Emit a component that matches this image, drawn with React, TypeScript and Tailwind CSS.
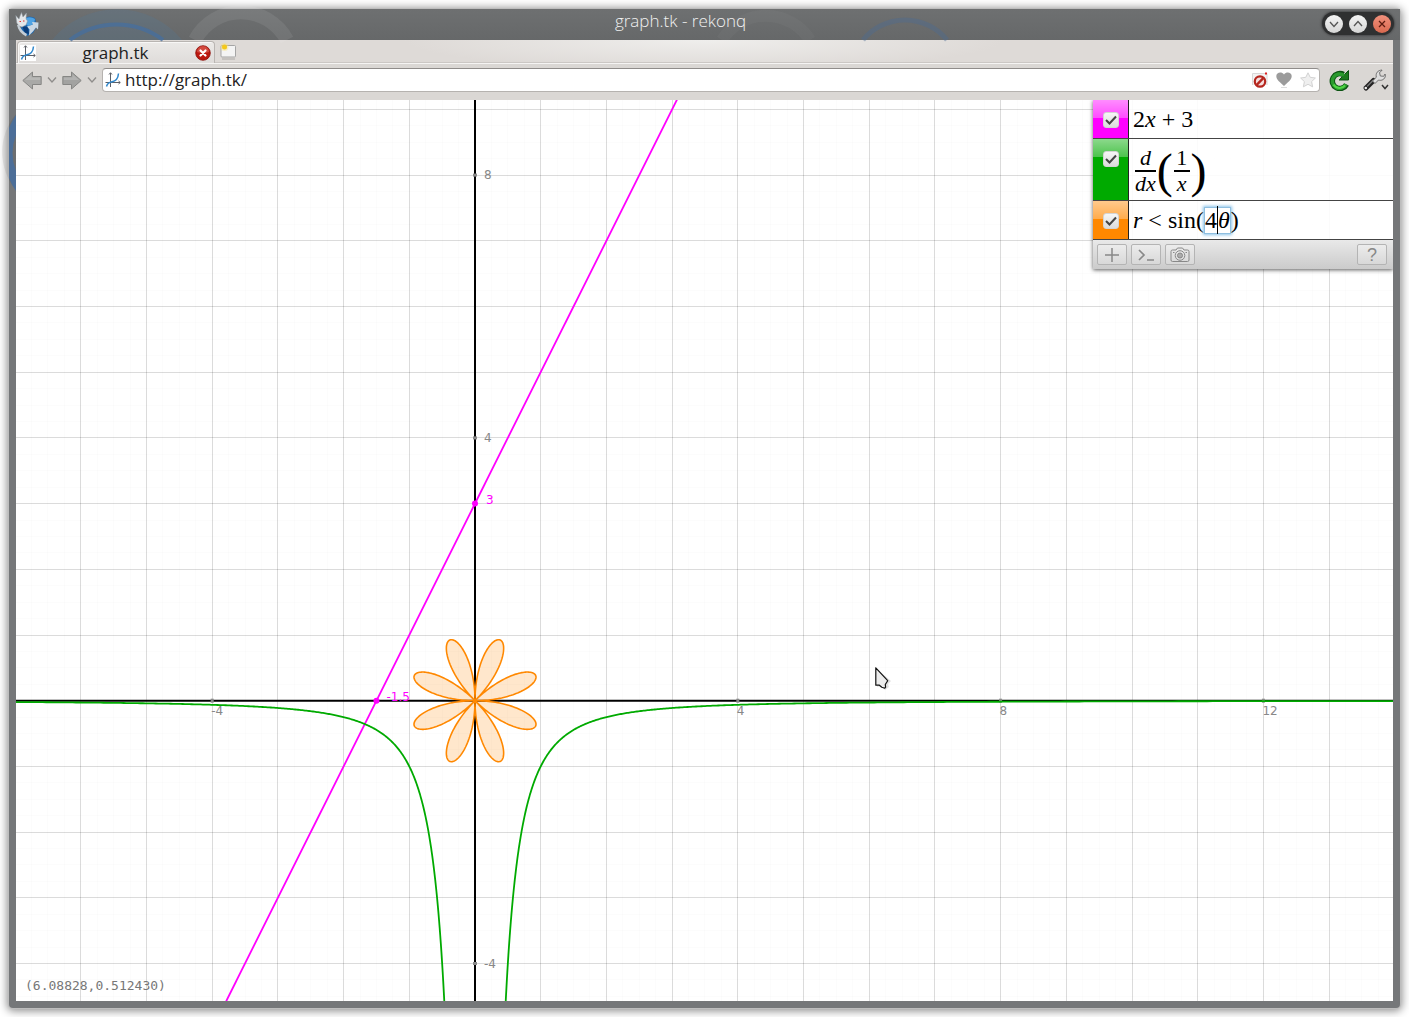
import { useState } from 'react';
import type { ReactNode } from 'react';
import clsx from 'clsx';

// Plot geometry, in pixels of the canvas
const ORIGIN_X = 459;
const ORIGIN_Y = 600.7;
const UNIT = 65.7;

const px = (x: number) => ORIGIN_X + x * UNIT;
const py = (y: number) => ORIGIN_Y - y * UNIT;

const toPath = (points: [number, number][]) =>
  points.map(([x, y], i) => `${i ? 'L' : 'M'}${px(x).toFixed(2)} ${py(y).toFixed(2)}`).join('');

const range = (from: number, to: number) => Array.from({ length: to - from + 1 }, (_, i) => from + i);

// -1/x² on both sides of the pole
const derivative = (sign: number) =>
  toPath(
    range(0, 600).map((i) => {
      const x = sign * 0.3 * Math.pow(120, i / 600);
      return [x, -1 / (x * x)] as [number, number];
    }),
  );

const rose =
  toPath(
    range(0, 720).map((i) => {
      const t = (i / 720) * 2 * Math.PI;
      const r = Math.sin(4 * t);
      return [r * Math.cos(t), r * Math.sin(t)] as [number, number];
    }),
  ) + 'Z';

const columns = range(-24, 40);
const rows = range(-20, 20);

function Plot() {
  return (
    <svg className="absolute inset-0 h-full w-full" role="img" aria-label="Graph of the equations">
      <g stroke="#000" strokeOpacity="0.012" shapeRendering="crispEdges">
        {range(-96, 160).map((i) => (
          <line key={`mx${i}`} x1={px(i / 4)} x2={px(i / 4)} y1="0" y2="100%" />
        ))}
        {range(-80, 80).map((i) => (
          <line key={`my${i}`} y1={py(i / 4)} y2={py(i / 4)} x1="0" x2="100%" />
        ))}
      </g>
      <g stroke="#000" strokeOpacity="0.13" shapeRendering="crispEdges">
        {columns.map((i) => (
          <line key={`x${i}`} x1={px(i)} x2={px(i)} y1="0" y2="100%" />
        ))}
        {rows.map((i) => (
          <line key={`y${i}`} y1={py(i)} y2={py(i)} x1="0" x2="100%" />
        ))}
      </g>
      <g stroke="#000" strokeWidth="2">
        <line x1={ORIGIN_X} x2={ORIGIN_X} y1="0" y2="100%" />
        <line y1={ORIGIN_Y} y2={ORIGIN_Y} x1="0" x2="100%" />
      </g>

      <g className="fill-[#888] font-['DejaVu_Sans'] text-[12px]">
        {[-4, 4, 8, 12].map((n) => (
          <g key={`lx${n}`}>
            <rect x={px(n) - 1.5} y={ORIGIN_Y - 2} width="3" height="4" />
            <text x={px(n) - 1} y={ORIGIN_Y + 14}>{n}</text>
          </g>
        ))}
        {[-4, 4, 8].map((n) => (
          <g key={`ly${n}`}>
            <rect x={ORIGIN_X - 2} y={py(n) - 1.5} width="4" height="3" />
            <text x={ORIGIN_X + 9} y={py(n) + 4}>{n}</text>
          </g>
        ))}
      </g>

      <g fill="none" strokeWidth="1.8">
        <path d={toPath([[-12, -21], [12, 27]])} stroke="#f0f" />
        <path d={derivative(-1)} stroke="#0a0" />
        <path d={derivative(1)} stroke="#0a0" />
        <path d={rose} stroke="#f80" strokeWidth="1.6" fill="#f80" fillOpacity="0.2" />
      </g>
      <g className="fill-[#f0f] font-['DejaVu_Sans'] text-[12px]">
        <circle cx={px(-1.5)} cy={ORIGIN_Y} r="3" />
        <circle cx={ORIGIN_X} cy={py(3)} r="3" />
        <text x={px(-1.5) + 10} y={ORIGIN_Y}>-1.5</text>
        <text x={ORIGIN_X + 11} y={py(3)}>3</text>
      </g>

      {/* Mouse pointer */}
      <g transform="translate(859 567)">
        <path d="M2 2v18l4-1 4 4 4-3-1-3 3-3Z" fill="#000" fillOpacity="0.12" />
        <path d="M.8.8v17.4h3.6l2.4 2.1 3 .9.8-1-.3-2.7 2.4-3.8Z" fill="#ececec" stroke="#111" strokeWidth="1.2" strokeLinejoin="round" />
      </g>
    </svg>
  );
}

function Favicon() {
  return (
    <svg viewBox="0 0 16 16" className="h-4 w-4 shrink-0 bg-white" fill="none" aria-hidden="true">
      <path d="M5.500 1v14M.5 10.500h14.500M4 2.500l1.500-1.800L7 2.500M13.500 9l1.800 1.500-1.800 1.500" stroke="#5c5f66" strokeWidth="1" />
      <path d="M1.500 14.500C2.500 11 4 10.300 7 9.800S13 7.500 13.500 1.500" stroke="#2f87cc" strokeWidth="1.500" />
    </svg>
  );
}

function TitleButton({ label, close, children }: { label: string; close?: boolean; children: ReactNode }) {
  return (
    <button
      aria-label={label}
      className={clsx(
        'flex h-[18px] w-[18px] items-center justify-center rounded-full bg-gradient-to-b',
        close ? 'from-[#f0907c] to-[#d9694f] text-[#5c1c10]' : 'from-[#f4f4f4] to-[#d6d6d6] text-[#555]',
      )}
    >
      <svg viewBox="0 0 18 18" className="h-[18px] w-[18px]" fill="none" stroke="currentColor" strokeWidth="1.300">
        {children}
      </svg>
    </button>
  );
}

// Wallpaper circles that show through the window frame
function FrameRings() {
  return (
    <svg className="pointer-events-none absolute inset-0 h-full w-full overflow-visible" fill="none" aria-hidden="true">
      <g transform="translate(-9 -9)">
        <path d="M52 40a84 84 0 0 1 130 0Z" fill="#4b7ba6" fillOpacity="0.2" />
        <path d="M70 40a78 78 0 0 1 93 0" stroke="#456f9f" strokeOpacity="0.75" strokeWidth="4" />
        <path d="M195 40a52 52 0 0 1 92 0" stroke="#fff" strokeOpacity="0.08" strokeWidth="14" />
        <path d="M722 40a52 52 0 0 1 88 0" stroke="#fff" strokeOpacity="0.03" strokeWidth="12" />
        <path d="M863 40a54 54 0 0 1 84 0" stroke="#4a6c94" strokeOpacity="0.4" strokeWidth="5" />
        <path d="M16 114a59 59 0 0 0 0 76Z" fill="#000" fillOpacity="0.07" />
        <path d="M16 115q-3 4-7 13v50q3 8 7 13v-20q-7-18 0-36Z" fill="#466f9f" fillOpacity="0.85" />
      </g>
    </svg>
  );
}

function TitleBar() {
  return (
    <header className="relative flex h-[31px] items-start bg-gradient-to-b from-[#6e7071] to-[#666869] pl-[6px] pt-[2px]">
      <FrameRings />
      <svg viewBox="0 0 24 26" className="relative h-[26px] w-6" aria-hidden="true">
        <path d="M6 9Q13 3 20 7l2 8-4 7-6 3-6-5Z" fill="#1c66ae" />
        <path d="M11 7q5-2 9 1l-1 5-6 2-3-3Z" fill="#4fa3e4" />
        <path d="M7 15l6 1 1 7-4-1Z" fill="#0b3d7a" />
        <path d="M.8 4.500L4 8l1-3 1.500-3.500L8 6l3.500-4-.5 6 1.500 2-1.500 4-4 2-3-1-2.200-3Z" fill="#e3e6e9" stroke="#8d979f" strokeWidth="0.500" />
        <path d="M2 14c1 5 4 9 9 11.500l1-2.500C8 21 6 18 4 14Z" fill="#c5ced6" />
        <path d="M12 15.500l6-2-1-2.500 6.500.5-.5 7-2-2-3 4-4 4 .5-6Z" fill="#cad8e5" />
        <path d="M4.500 10.500h1.500M8 10h1.500" stroke="#d33" strokeWidth="1.200" />
      </svg>
      <h1 className="relative flex-1 text-center text-[17px] font-light leading-5 text-[#f1f1f1]">graph.tk - rekonq</h1>
      <div className="relative mr-[6px] mt-px flex h-[23px] items-center gap-[6px] rounded-full bg-[#2f3031] px-[3px] shadow-[0_0_2px_1px_#4a4b4c]">
        <TitleButton label="Minimize">
          <path d="M5 7l4 4.500L13 7" />
        </TitleButton>
        <TitleButton label="Maximize">
          <path d="M5 11l4-4.500L13 11" />
        </TitleButton>
        <TitleButton label="Close" close>
          <path d="M6 6l6 6M12 6l-6 6" />
        </TitleButton>
      </div>
    </header>
  );
}

function TabBar() {
  return (
    <div className="flex h-6 items-stretch border-b border-[#f5f4f3] bg-[#dedad7] bg-[radial-gradient(ellipse_300px_30px_at_50%_0,#efeeec,#dedad7)] shadow-[inset_0_-1px_#cbc7c4]">
      <div className="mx-px mt-px flex w-[198px] items-center rounded-t border-x border-t border-[#b9b5b2] bg-gradient-to-b from-[#ebe9e7] to-[#dfdcda] pl-[2px] pr-[3px] shadow-[inset_1px_1px_#f8f7f6]">
        <Favicon />
        <span className="flex-1 text-center text-[17px] leading-5 text-[#222]">graph.tk</span>
        <button aria-label="Close tab">
          <svg viewBox="0 0 16 16" className="h-4 w-4">
            <circle cx="8" cy="8" r="7.300" fill="#bb1810" stroke="#8c100b" strokeWidth="0.800" />
            <path d="M2 7a6 6 0 0 1 12 0q-6 2-12 0Z" fill="#e36a5f" fillOpacity="0.6" />
            <path d="M5.500 5.500l5 5M10.500 5.500l-5 5" stroke="#fff" strokeWidth="2.200" strokeLinecap="round" />
          </svg>
        </button>
      </div>
      <button aria-label="New tab" className="ml-1 self-start pt-[3px]">
        <svg viewBox="0 0 18 18" className="h-[18px] w-[18px]">
          <path d="M2 16h13" stroke="#000" strokeOpacity="0.15" strokeWidth="1.500" />
          <rect x="1" y="2.500" width="14.500" height="11.500" rx="1" fill="#f4f4f4" stroke="#a5a5a5" />
          <circle cx="4.500" cy="4" r="4" fill="#fbe27a" fillOpacity="0.4" />
          <circle cx="4.500" cy="4" r="2.500" fill="#f3c81c" />
        </svg>
      </button>
    </div>
  );
}

function Arrow({ forward }: { forward?: boolean }) {
  return (
    <svg viewBox="0 0 20 20" className={clsx('h-5 w-5', forward && '-scale-x-100')}>
      <path d="M.8 10.500L10.500 2v4.500h8.700v8h-8.700V19Z" fill={forward ? '#a2a2a0' : '#a9a9a7'} stroke="#868684" strokeLinejoin="round" />
      <path d="M3 10l6.500-5.500v3h8.700V10Z" fill="#fff" fillOpacity="0.18" />
    </svg>
  );
}

function HistoryMenu({ label }: { label: string }) {
  return (
    <button aria-label={label}>
      <svg viewBox="0 0 12 12" className="h-3 w-3" fill="none" stroke="#8f8d8b" strokeWidth="1.300">
        <path d="M2 3.500L6 8l4-4.500" />
      </svg>
    </button>
  );
}

function Toolbar() {
  const [url, setUrl] = useState('http://graph.tk/');

  return (
    <div className="flex h-9 items-center gap-1 bg-[#dad7d4] pb-2 pl-[6px] pr-[3px] pt-1">
      <button aria-label="Back">
        <Arrow />
      </button>
      <HistoryMenu label="Back history" />
      <button aria-label="Forward">
        <Arrow forward />
      </button>
      <HistoryMenu label="Forward history" />
      <label className="flex h-6 min-w-0 flex-1 items-center rounded border border-[#b5b2af] border-t-[#8f8c8a] bg-white px-[2px]">
        <Favicon />
        <input
          aria-label="Address"
          value={url}
          onChange={(e) => setUrl(e.target.value)}
          className="h-[22px] min-w-0 flex-1 px-1 text-[17px] leading-[22px] text-[#222] outline-none"
        />
        <span className="flex items-center gap-2 pr-px">
          <button aria-label="Block ads">
            <svg viewBox="0 0 16 16" className="h-4 w-4" fill="none">
              <path d="M.5 13V1.500h14.500V13" fill="#f3f3f3" stroke="#d8d8d8" />
              <rect x="13" y="0.500" width="2" height="2" fill="#d22" />
              <circle cx="8" cy="9.500" r="5.200" fill="#f5dedd" stroke="#b5271f" strokeWidth="2.200" />
              <path d="M4.700 12.800l6.600-6.600" stroke="#b5271f" strokeWidth="2.400" />
            </svg>
          </button>
          <button aria-label="Add to favorites">
            <svg viewBox="0 0 16 16" className="h-4 w-4">
              <path d="M8 14C4.500 10.500.3 8 .3 4 .3.500 5.500-1 8 2.500c2.500-3.500 7.700-2 7.700 1.500 0 4-4.200 6.500-7.700 10Z" fill="#9b9b9b" />
              <path d="M5 15.500h6" stroke="#ddd" />
            </svg>
          </button>
          <button aria-label="Bookmark page">
            <svg viewBox="0 0 16 16" className="h-4 w-4">
              <path d="M8 .8l2.200 4.500 5.200.7-3.800 3.600 1 5.200L8 12.300l-4.600 2.500 1-5.200L.6 6l5.200-.7Z" fill="#efefef" stroke="#d2d2d2" strokeLinejoin="round" />
            </svg>
          </button>
        </span>
      </label>
      <button aria-label="Reload" className="ml-1">
        <svg viewBox="0 0 22 22" className="h-[22px] w-[22px]" fill="none">
          <path d="M18.500 15.500A7.500 7.500 0 1 1 15.500 5.500" stroke="#0b5312" strokeWidth="5.500" />
          <path d="M20.500 1.500v9.500h-9.500Z" fill="#1d7a1f" stroke="#0b5312" strokeLinejoin="round" />
          <path d="M18 15.200A7.200 7.200 0 1 1 16 6.500" stroke="#2a9a2e" strokeWidth="3.500" />
          <path d="M5.500 15.500a7.200 7.200 0 0 0 11.500 1" stroke="#4fd644" strokeWidth="2" />
        </svg>
      </button>
      <button aria-label="Settings" className="ml-2">
        <svg viewBox="0 0 28 24" className="h-6 w-7" fill="none">
          <path d="M4 20L11.500 12.500" stroke="#222" strokeWidth="5" strokeLinecap="round" />
          <path d="M5.500 18L11 12.500" stroke="#777" strokeWidth="1.500" strokeLinecap="round" />
          <circle cx="3.800" cy="20" r="1.300" fill="#eee" />
          <path d="M10.500 13l3.800-3.700C13.500 5 15.500 2.500 20 2l-.5 1-2 1.500.8 3.500 3.500.3 1.200-2.300.5 1.500c-.5 4-4 5.500-7 4.500L13 15.500Z" fill="#dedede" stroke="#666" strokeWidth="0.900" strokeLinejoin="round" />
          <path d="M20 17l3 3.500 3-3.500" stroke="#333" strokeWidth="1.500" />
        </svg>
      </button>
    </div>
  );
}

function Fraction({ top, bottom }: { top: ReactNode; bottom: ReactNode }) {
  return (
    <span className="inline-flex flex-col items-center text-[22px] leading-6">
      <span>{top}</span>
      <span className="border-t-2 border-black">{bottom}</span>
    </span>
  );
}

function Equation({ name, color, children }: { name: string; color: string; children: ReactNode }) {
  const [shown, setShown] = useState(true);

  return (
    <li className="flex border-b border-[#444]">
      <div className={clsx('relative flex w-9 shrink-0 justify-center border-r border-[#222] pl-px pt-3', color)}>
        <div className="absolute inset-x-0 top-0 h-[18px] bg-gradient-to-b from-white/55 to-white/30" />
        <label className="relative h-4 w-4">
          <input
            type="checkbox"
            aria-label={`Show ${name}`}
            checked={shown}
            onChange={() => setShown(!shown)}
            className="block h-4 w-4 appearance-none rounded-[3px] border border-[#d4d4d4] bg-gradient-to-b from-[#f6f6f6] to-[#dcdcdc]"
          />
          {shown && (
            <svg viewBox="0 0 16 16" className="pointer-events-none absolute inset-0 h-4 w-4" fill="none" stroke="#444" strokeWidth="2">
              <path d="M3 8l3.500 3.500L13 4.500" />
            </svg>
          )}
        </label>
      </div>
      <div className="flex flex-1 items-center bg-white/90 pl-1 font-['Liberation_Serif',serif] text-[24px] text-black">
        {children}
      </div>
    </li>
  );
}

function PanelButton({ label, children }: { label: string; children: ReactNode }) {
  return (
    <button
      aria-label={label}
      className="flex h-[21px] w-[30px] items-center justify-center rounded-[2px] border border-[#b4b4b4] bg-gradient-to-b from-[#ececec] to-[#d8d8d8] text-[#888]"
    >
      {children}
    </button>
  );
}

function EquationPanel() {
  return (
    <aside className="absolute right-0 top-0 w-[300px] shadow-[0_1px_4px_rgba(0,0,0,0.65)]">
      <ul>
        <Equation name="2x + 3" color="bg-[#f0f]">
          <span className="py-1 leading-[30px]">
            2<i>x</i> + 3
          </span>
        </Equation>
        <Equation name="d/dx (1/x)" color="bg-[#0a0]">
          <span className="flex h-[61px] items-center gap-px px-[2px] pt-[2px]">
            <Fraction top={<i>d</i>} bottom={<i>dx</i>} />
            <span className="text-[48px] leading-[48px]">(</span>
            <Fraction top="1" bottom={<i className="px-[3px]">x</i>} />
            <span className="text-[48px] leading-[48px]">)</span>
          </span>
        </Equation>
        <Equation name="r < sin(4θ)" color="bg-[#f80]">
          <span className="flex items-center py-1 leading-[30px]">
            <span>
              <i>r</i> &lt; sin(
            </span>
            <span className="flex h-[27px] items-center border border-[#8fbfe0] leading-[27px] shadow-[0_0_3px_1px_#8cc4ea]">
              4<span className="h-7 w-px bg-black" />
              <i>θ</i>
            </span>
            <span>)</span>
          </span>
        </Equation>
      </ul>
      <div className="flex h-[29px] items-center gap-1 bg-gradient-to-b from-[#e9e9e9] to-[#cbcbcb] pl-1 pr-[6px]">
        <PanelButton label="Add equation">
          <svg viewBox="0 0 16 16" className="h-4 w-4" stroke="currentColor" strokeWidth="1.500">
            <path d="M8 1v14M1 8h14" />
          </svg>
        </PanelButton>
        <PanelButton label="Console">
          <svg viewBox="0 0 18 16" className="h-4 w-[18px]" fill="none" stroke="currentColor" strokeWidth="1.700">
            <path d="M2 3l5 5-5 5M10 13h7" />
          </svg>
        </PanelButton>
        <PanelButton label="Screenshot">
          <svg viewBox="0 0 20 16" className="h-4 w-5" fill="none" stroke="currentColor">
            <path d="M1 4.500q0-1.500 1.500-1.500H6l1.500-2h5L14 3h3.500Q19 3 19 4.500v8.500q0 1.500-1.500 1.500h-15Q1 14.500 1 13Z" />
            <circle cx="10" cy="8.500" r="4.800" />
            <circle cx="10" cy="8.500" r="2.500" fill="currentColor" fillOpacity="0.6" />
            <path d="M3 5.500h1.500M15.500 5.500H17" />
          </svg>
        </PanelButton>
        <span className="flex-1" />
        <PanelButton label="Help">
          <span className="font-['Liberation_Sans'] text-[18px] leading-5">?</span>
        </PanelButton>
      </div>
    </aside>
  );
}

export default function App() {
  return (
    <div className="flex h-screen bg-white p-[9px] font-['Open_Sans',sans-serif]">
      <div className="relative flex min-w-0 flex-1 flex-col rounded bg-[#757779] shadow-[0_0_0_1px_#bdbdbd,0_1px_8px_2px_rgba(0,0,0,0.45)]">
        <TitleBar />
        <div className="mx-[7px] mb-[7px] flex min-h-0 flex-1 flex-col">
          <TabBar />
          <Toolbar />
          <main className="relative min-h-0 flex-1 overflow-hidden bg-white">
            <Plot />
            <EquationPanel />
            <output className="absolute bottom-[7px] left-[9px] font-['DejaVu_Sans_Mono'] text-[13px] leading-4 text-[#777]">
              (6.08828,0.512430)
            </output>
          </main>
        </div>
      </div>
    </div>
  );
}
